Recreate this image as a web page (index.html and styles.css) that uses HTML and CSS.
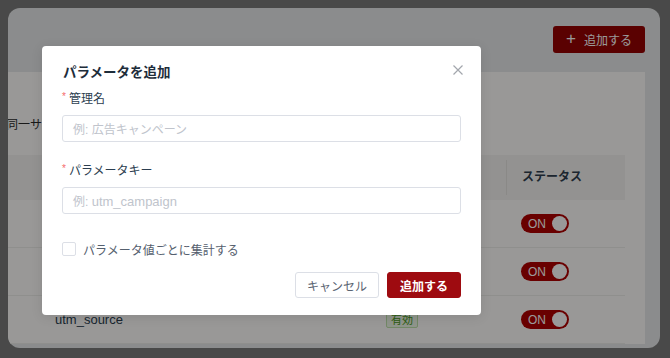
FILE: index.html
```html
<!DOCTYPE html>
<html lang="ja">
<head>
<meta charset="utf-8">
<title>パラメータを追加</title>
<link rel="stylesheet" href="styles.css">
</head>
<body>
<div class="app">
  <div class="card">
    <div class="card-head">
      <button class="btn-add"><span class="plus">+</span>追加する</button>
    </div>
    <div class="panel">
      <p class="note">同一サイ</p>
      <div class="table">
        <div class="tr th">
          <div class="c1"></div>
          <div class="c2"></div>
          <div class="c3">ステータス</div>
        </div>
        <div class="tr">
          <div class="c1"></div>
          <div class="c2"></div>
          <div class="c3"><span class="switch">ON<i class="knob"></i></span></div>
        </div>
        <div class="tr">
          <div class="c1"></div>
          <div class="c2"></div>
          <div class="c3"><span class="switch">ON<i class="knob"></i></span></div>
        </div>
        <div class="tr">
          <div class="c1">utm_source</div>
          <div class="c2"><span class="tag">有効</span></div>
          <div class="c3"><span class="switch">ON<i class="knob"></i></span></div>
        </div>
      </div>
    </div>
  </div>
</div>

<div class="overlay"></div>

<div class="modal">
  <div class="modal-head">
    <h2 class="modal-title">パラメータを追加</h2>
    <svg class="close" width="10" height="10" viewBox="0 0 10 10"><path d="M0.5 0.5 L9.5 9.5 M9.5 0.5 L0.5 9.5" stroke="#a3a6ad" stroke-width="1.2" fill="none"/></svg>
  </div>
  <div class="field">
    <label class="label"><span class="req">*</span>管理名</label>
    <div class="input"><span class="ph">例: 広告キャンペーン</span></div>
  </div>
  <div class="field">
    <label class="label"><span class="req">*</span>パラメータキー</label>
    <div class="input"><span class="ph">例: <span class="lat">utm_campaign</span></span></div>
  </div>
  <div class="check-row">
    <span class="checkbox"></span>
    <span class="check-label">パラメータ値ごとに集計する</span>
  </div>
  <div class="footer">
    <button class="btn btn-cancel">キャンセル</button>
    <button class="btn btn-primary">追加する</button>
  </div>
</div>
</body>
</html>
```
FILE: styles.css
```css
* { box-sizing: border-box; }

body {
  margin: 0;
  width: 670px;
  height: 358px;
  overflow: hidden;
  position: relative;
  background: #7b7b7b;
  font-family: "Liberation Sans", "Noto Sans CJK JP", sans-serif;
}

.app {
  padding: 8px 10px 10px 8px;
}

.card {
  width: 652px;
  height: 340px;
  background: #e8eaeb;
  border-radius: 12px;
  overflow: hidden;
  display: flex;
  flex-direction: column;
  padding-bottom: 4px;
}

.card-head {
  height: 64px;
  display: flex;
  justify-content: flex-end;
  align-items: flex-start;
  padding: 18px 15px 0 0;
}

.btn-add {
  width: 92px;
  height: 27px;
  border: none;
  border-radius: 3px;
  background: #960202;
  color: #fff;
  font-family: inherit;
  font-size: 12px;
  display: flex;
  align-items: center;
  justify-content: center;
  padding: 0;
  gap: 8px;
}

.plus {
  font-size: 17px;
  font-weight: 300;
  line-height: 1;
  margin-top: -2px;
}

.panel {
  flex: 1;
  margin-right: 15px;
  background: #fffefc;
  padding-right: 20px;
}

.note {
  margin: 43px 0 20px -2px;
  line-height: 20px;
  font-size: 12px;
  color: #2a2a2a;
  white-space: nowrap;
}

.table {
  width: 617px;
}

.tr {
  display: flex;
  align-items: center;
  height: 48px;
  border-bottom: 1px solid #efeeeb;
  font-size: 13px;
  color: #2c3e50;
}

.tr.th {
  height: 45px;
  background: #f5f4f2;
  border-bottom: none;
  font-weight: bold;
  font-size: 12px;
  color: #303f4f;
}

.c1 { width: 330px; padding-left: 47px; }
.c2 { width: 168px; padding-left: 48px; }
.c3 { width: 119px; padding-left: 15px; }

.th .c3 {
  border-left: 1px solid #e6e5e2;
  height: 35px;
  line-height: 35px;
}

.tag {
  display: inline-block;
  height: 15px;
  line-height: 13px;
  padding: 0 4px;
  font-size: 11px;
  color: #4a9a22;
  background: #eef8e8;
  border: 1px solid #bfe3aa;
  border-radius: 2px;
}

.switch {
  display: inline-flex;
  align-items: center;
  justify-content: space-between;
  width: 48px;
  height: 19px;
  border-radius: 10px;
  background: #b00000;
  color: #fff;
  font-size: 12px;
  padding: 0 2px 0 7px;
}

.knob {
  width: 15px;
  height: 15px;
  border-radius: 50%;
  background: #fff;
}

.overlay {
  position: absolute;
  inset: 0;
  background: rgba(0, 0, 0, 0.4);
}

.modal {
  position: absolute;
  left: 42px;
  top: 46px;
  width: 439px;
  height: 269px;
  background: #fff;
  border-radius: 4px;
  padding: 17px 20px 17px 20px;
  box-shadow: 0 2px 12px rgba(0, 0, 0, 0.1);
}

.modal-head {
  display: flex;
  justify-content: space-between;
  align-items: center;
  height: 20px;
  margin-bottom: 6px;
}

.modal-title {
  margin: 0 0 0 1px;
  font-size: 13.5px;
  font-weight: bold;
  color: #1e2d3b;
  line-height: 20px;
}

.close {
  margin-right: -2px;
  margin-top: -6px;
}

.field {
  margin-bottom: 19px;
}

.label {
  display: flex;
  align-items: center;
  height: 20px;
  line-height: 20px;
  font-size: 12px;
  color: #2c3e50;
  margin-bottom: 6px;
}

.req {
  color: #f56c6c;
  font-size: 10px;
  margin-right: 3px;
  margin-top: -5px;
}

.input {
  height: 27px;
  border: 1px solid #dcdfe6;
  border-radius: 3px;
  display: flex;
  align-items: center;
  padding-left: 10px;
}

.ph {
  font-size: 12px;
  color: #c0c4cc;
}

.lat {
  font-size: 13px;
}

.check-row {
  display: flex;
  align-items: center;
  gap: 7px;
  height: 20px;
  margin-top: 25px;
}

.checkbox {
  width: 14px;
  height: 14px;
  border: 1px solid #dcdfe6;
  border-radius: 2px;
  background: #fff;
}

.check-label {
  font-size: 12px;
  color: #55606e;
}

.footer {
  display: flex;
  justify-content: flex-end;
  gap: 8px;
  margin-top: 13px;
}

.btn {
  height: 26px;
  border-radius: 3px;
  font-family: inherit;
  font-size: 12px;
  padding: 0;
}

.btn-cancel {
  width: 84px;
  background: #fff;
  border: 1px solid #dcdfe6;
  color: #5a6472;
}

.btn-primary {
  width: 74px;
  background: #9e0b10;
  border: 1px solid #9e0b10;
  color: #fff;
  font-weight: bold;
}
```
